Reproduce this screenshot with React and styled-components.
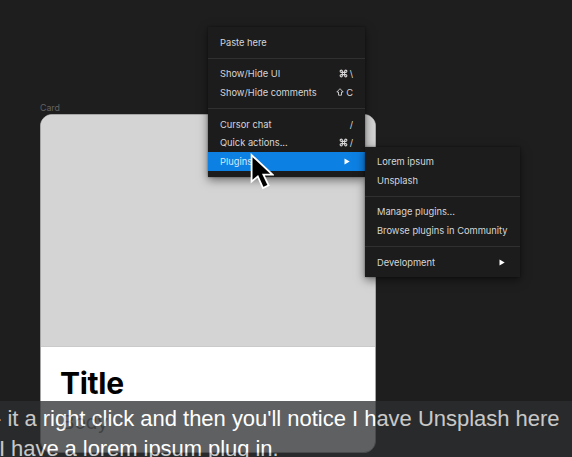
import React from "react";
import styled, { createGlobalStyle } from "styled-components";

const GlobalStyle = createGlobalStyle`
  * { box-sizing: border-box; }
  html, body { margin: 0; overflow: hidden; background: #1e1e1e; }
`;

const Canvas = styled.main`
  position: relative;
  width: 572px;
  height: 457px;
  overflow: hidden;
  background: #1e1e1e;
  font-family: Inter, "Liberation Sans", sans-serif;
`;

const Frame = styled.section`
  position: absolute;
  left: 40px;
  top: 102px;
  width: 336px;
`;

const FrameLabel = styled.div`
  height: 12px;
  font-size: 8.8px;
  line-height: 11px;
  color: #626262;
`;

const Card = styled.article`
  height: 339px;
  border-radius: 12px;
  overflow: hidden;
  background: #fff;
  border: 1px solid #a5a5a5;
`;

const CardImage = styled.div`
  height: 232px;
  background: #d4d4d4;
  border-bottom: 1px solid #cacaca;
`;

const CardText = styled.div`
  padding: 19px 19px;
`;

const CardTitle = styled.h1`
  margin: 0;
  font-size: 30px;
  line-height: 35px;
  font-weight: 700;
  letter-spacing: -0.3px;
  color: #000;
`;

const CardBody = styled.p`
  margin: 6px 0 0 2px;
  font-size: 19px;
  line-height: 31px;
  color: #808080;
`;

const Menu = styled.div`
  position: absolute;
  left: ${(p) => p.$x}px;
  top: ${(p) => p.$y}px;
  width: ${(p) => p.$width}px;
  padding: 6px 0 6px;
  background: #1c1c1c;
  box-shadow: 0 3px 9px rgba(0, 0, 0, 0.5), 0 0 2px rgba(0, 0, 0, 0.4);
`;

const Item = styled.div`
  display: flex;
  align-items: center;
  justify-content: space-between;
  height: 18.6px;
  padding: 0 12px;
  font-size: 9.3px;
  white-space: nowrap;
  color: ${(p) => (p.$active ? "#d5e9fb" : "#d6d6d6")};
  background: ${(p) => (p.$active ? "#0d80e4" : "transparent")};
`;

const Divider = styled.div`
  height: 1px;
  margin: 6px 0 6px;
  background: #303030;
`;

const Shortcut = styled.span`
  display: flex;
  align-items: center;
  gap: 2px;
`;

const Arrow = styled.svg`
  width: 6px;
  height: 7px;
  margin-right: 3.5px;
  fill: #fff;
`;

const Pointer = styled.svg`
  position: absolute;
  left: 249px;
  top: 153px;
  width: 25px;
  height: 37px;
`;

const Caption = styled.div`
  position: absolute;
  left: 0;
  right: 0;
  top: 401px;
  height: 56px;
  padding-top: 3px;
  overflow: hidden;
  background: #2c2e30;
  opacity: 0.755;
  font-family: "Liberation Sans", Arial, sans-serif;
  font-size: 22px;
  line-height: 30px;
  color: #fff;
`;

const CaptionLine = styled.div`
  white-space: nowrap;
  margin-left: ${(p) => p.$shift}px;
  letter-spacing: ${(p) => p.$tracking}px;
`;

const Submenu = () => (
  <Arrow viewBox="0 0 6 7"><path d="M.5.6 5.7 3.5.5 6.4Z" /></Arrow>
);

const Command = () => (
  <svg width="9" height="9" viewBox="0 0 24 24" fill="none" stroke="#d6d6d6" strokeWidth="2.8">
    <path d="M15 6v12a3 3 0 1 0 3-3H6a3 3 0 1 0 3 3V6a3 3 0 1 0-3 3h12a3 3 0 1 0-3-3" />
  </svg>
);

const Shift = () => (
  <svg width="8" height="8" viewBox="0 0 8 8" fill="none" stroke="#d6d6d6" strokeWidth="0.9">
    <path d="M4 .7 7.2 4H5.5v3.2h-3V4H.8Z" />
  </svg>
);

export default function App() {
  return (
    <>
      <GlobalStyle />
      <Canvas>
        <Frame>
          <FrameLabel>Card</FrameLabel>
          <Card>
            <CardImage />
            <CardText>
              <CardTitle>Title</CardTitle>
              <CardBody>Body</CardBody>
            </CardText>
          </Card>
        </Frame>
        <Menu $x={208} $y={27} $width={157}>
          <Item>Paste here</Item>
          <Divider />
          <Item>Show/Hide UI<Shortcut><Command />\</Shortcut></Item>
          <Item>Show/Hide comments<Shortcut><Shift />C</Shortcut></Item>
          <Divider />
          <Item>Cursor chat<Shortcut>/</Shortcut></Item>
          <Item>Quick actions...<Shortcut><Command />/</Shortcut></Item>
          <Item $active>Plugins<Submenu /></Item>
        </Menu>
        <Menu $x={365} $y={146.5} $width={155}>
          <Item>Lorem ipsum</Item>
          <Item>Unsplash</Item>
          <Divider />
          <Item>Manage plugins...</Item>
          <Item>Browse plugins in Community</Item>
          <Divider />
          <Item>Development<Submenu /></Item>
        </Menu>
        <Pointer viewBox="0 0 25 37">
          <path d="M2.6 2V28.6L8.8 23.4 14 35 19.6 32.4 14.4 21.6H23.4Z" fill="#000" stroke="#fff" strokeWidth="1.8" />
        </Pointer>
        <Caption>
          <CaptionLine $shift={-6} $tracking={-0.02}>- it a right click and then you'll notice I have Unsplash here</CaptionLine>
          <CaptionLine $shift={-1} $tracking={-0.06}>I have a lorem ipsum plug in.</CaptionLine>
        </Caption>
      </Canvas>
    </>
  );
}
